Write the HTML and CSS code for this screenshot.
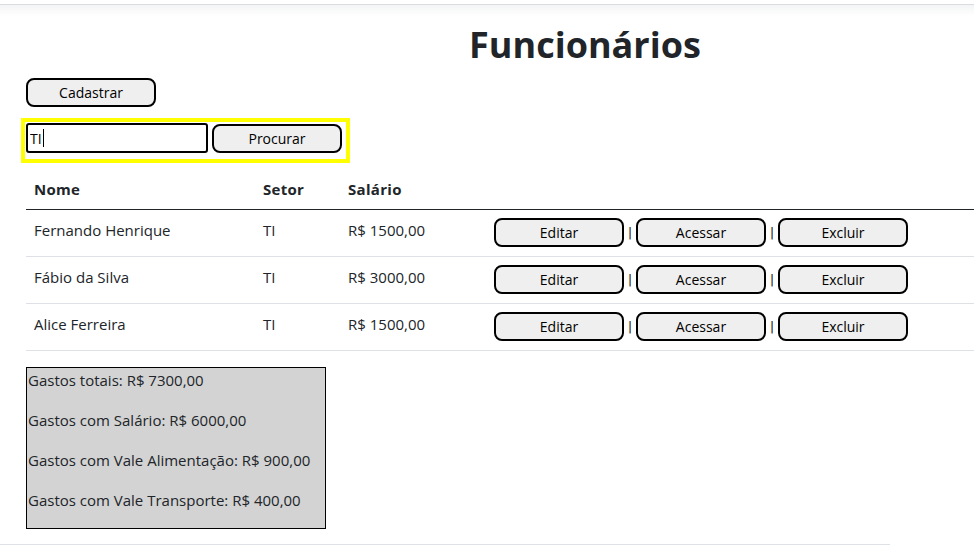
FILE: index.html
```html
<!DOCTYPE html>
<html lang="pt-BR">
<head>
<meta charset="utf-8">
<title>Funcionários</title>
<link rel="stylesheet" href="styles.css">
</head>
<body>
<div class="topbar"></div>
<main class="container">
  <h1 class="title">Funcionários</h1>
  <div class="actions">
    <button class="btn">Cadastrar</button>
  </div>
  <form class="search">
    <input class="search-input" type="text" value="TI"><span class="caret"></span>
    <button class="btn" type="button">Procurar</button>
  </form>
  <table class="table">
    <thead>
      <tr><th class="c-nome">Nome</th><th class="c-setor">Setor</th><th class="c-sal">Salário</th><th></th></tr>
    </thead>
    <tbody>
      <tr><td>Fernando Henrique</td><td>TI</td><td>R$ 1500,00</td><td class="ops"><button class="btn">Editar</button><span class="sep">|</span><button class="btn">Acessar</button><span class="sep">|</span><button class="btn">Excluir</button></td></tr>
      <tr><td>Fábio da Silva</td><td>TI</td><td>R$ 3000,00</td><td class="ops"><button class="btn">Editar</button><span class="sep">|</span><button class="btn">Acessar</button><span class="sep">|</span><button class="btn">Excluir</button></td></tr>
      <tr><td>Alice Ferreira</td><td>TI</td><td>R$ 1500,00</td><td class="ops"><button class="btn">Editar</button><span class="sep">|</span><button class="btn">Acessar</button><span class="sep">|</span><button class="btn">Excluir</button></td></tr>
    </tbody>
  </table>
  <div class="gastos">
    <p>Gastos totais: R$ 7300,00</p>
    <p>Gastos com Salário: R$ 6000,00</p>
    <p>Gastos com Vale Alimentação: R$ 900,00</p>
    <p>Gastos com Vale Transporte: R$ 400,00</p>
  </div>
</main>
<footer class="footer"></footer>
</body>
</html>
```
FILE: styles.css
```css
html, body {
  margin: 0;
  padding: 0;
  background: #fff;
  overflow: hidden;
}
body {
  font-family: "Open Sans", "Noto Sans", sans-serif;
  font-size: 15px;
  line-height: 24px;
  color: #212529;
  width: 974px;
  height: 553px;
}
.topbar {
  height: 11px;
  margin-top: 4px;
  border-top: 1px solid #dadce0;
  background: linear-gradient(#f3f4f5, #ffffff);
}
.container {
  width: 1118px;
  padding-left: 26px;
}
.title {
  margin: 9px 0 0 0;
  text-align: center;
  font-size: 36px;
  line-height: 40px;
  font-weight: 700;
  color: #212529;
}
.actions {
  display: flex;
  margin-top: 13px;
}
.btn {
  box-sizing: border-box;
  width: 130px;
  height: 29px;
  padding: 0;
  border: 2px solid #000;
  border-radius: 8px;
  background: #efefef;
  font-family: "Open Sans", "Noto Sans", sans-serif;
  font-size: 14px;
  color: #000;
  vertical-align: top;
}
.search {
  display: flex;
  width: fit-content;
  align-items: flex-start;
  gap: 4px;
  margin: 11px 0 0 -5px;
  border: 4px solid #ffff00;
  padding: 1px 4px 6px 1px;
  position: relative;
}
.search-input {
  box-sizing: border-box;
  width: 182px;
  height: 30px;
  border: 2px solid #000;
  border-radius: 3px;
  padding: 0 2px;
  font-family: "Open Sans", "Noto Sans", sans-serif;
  font-size: 14px;
  color: #000;
  outline: none;
}
.search .btn {
  margin-top: 1px;
}
.caret {
  position: absolute;
  left: 18px;
  top: 7px;
  width: 1px;
  height: 18px;
  background: #000;
}
.table {
  width: 100%;
  margin-top: 6px;
  margin-bottom: 16px;
  border-collapse: collapse;
}
.table th, .table td {
  text-align: left;
  vertical-align: top;
  padding: 8px;
}
.table th {
  font-weight: 700;
  border-bottom: 1px solid #212529;
  letter-spacing: 0.3px;
}
.table td {
  border-bottom: 1px solid #dee2e6;
  height: 29px;
  padding-bottom: 9px;
}
.c-nome { width: 213px; }
.c-setor { width: 69px; }
.c-sal { width: 130px; }
.table td.ops {
  white-space: nowrap;
  line-height: 29px;
}
.sep {
  display: inline-block;
  width: 12px;
  text-align: center;
  font-family: "DejaVu Sans", sans-serif;
  font-size: 12px;
  line-height: 31px;
  height: 29px;
  color: #000;
  vertical-align: top;
}
.gastos {
  box-sizing: border-box;
  width: 300px;
  border: 1px solid #000;
  background: #d3d3d3;
  padding-left: 1px;
}
.gastos p {
  margin: 0 0 16px 0;
}
.footer {
  margin-top: 15px;
  border-top: 1px solid #dee2e6;
  width: 890px;
}
```
